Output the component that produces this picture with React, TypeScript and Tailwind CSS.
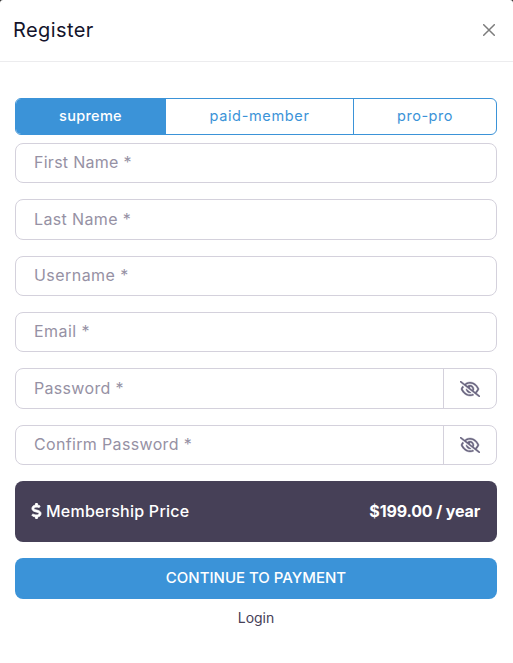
import { useState } from "react";
import { FaDollarSign, FaRegEyeSlash } from "react-icons/fa6";

const plans = [
  { name: "supreme", className: "w-[150px] font-medium tracking-[0.3px]" },
  { name: "paid-member", className: "w-[188px] tracking-[0.65px]" },
  { name: "pro-pro", className: "flex-1 tracking-[0.5px]" },
];

const fields = [
  { label: "First Name *", className: "tracking-[0.27px]" },
  { label: "Last Name *", className: "tracking-[0.36px]" },
  { label: "Username *", className: "tracking-[0.45px]" },
  { label: "Email *", className: "tracking-[0.45px]" },
  { label: "Password *", className: "tracking-[0.32px]", secret: true },
  { label: "Confirm Password *", className: "tracking-[0.34px]", secret: true },
];

const App = () => {
  const [plan, setPlan] = useState("supreme");

  return (
    <div className="h-[663px] w-full bg-[#2b2b2b] font-['Inter',sans-serif]">
      <div className="flex h-full flex-col rounded-t-[3px] bg-white">
        <header className="flex h-[62px] shrink-0 items-center justify-between border-b border-[#ececee] pr-[18px] pb-[2px] pl-[13px]">
          <h1 className="text-[20px] tracking-[0.4px] text-[#14142b]">Register</h1>
          <button aria-label="Close">
            <svg className="size-3" viewBox="0 0 12 12" stroke="#7c7c7c" strokeWidth="1.5" strokeLinecap="round">
              <path d="M0.7 0.7L11.3 11.3M11.3 0.7L0.7 11.3" />
            </svg>
          </button>
        </header>

        <form className="flex flex-col pt-9 pr-4 pl-[15px]" onSubmit={(e) => e.preventDefault()}>
          {/* Membership plans */}
          <div className="mb-2 flex h-[37px] overflow-hidden rounded-[6px] border border-[#3b93d8]">
            {plans.map(({ name, className }) => (
              <button
                key={name}
                type="button"
                onClick={() => setPlan(name)}
                className={`border-r border-[#3b93d8] pb-px text-[14.5px] last:border-r-0 ${className} ${
                  plan === name ? "bg-[#3b93d8] text-white" : "text-[#3b93d8]"
                }`}
              >
                {name}
              </button>
            ))}
          </div>

          {fields.map(({ label, className, secret }) => (
            <div
              key={label}
              className="mb-4 flex h-[40.35px] overflow-hidden rounded-[8px] border border-[#d4d1dc]"
            >
              <input
                type={secret ? "password" : "text"}
                placeholder={label}
                className={`min-w-0 flex-1 pb-[2px] pl-[18px] text-[16px] outline-none placeholder:text-[#9691a4] ${className}`}
              />
              {secret && (
                <button
                  type="button"
                  aria-label="Show password"
                  className="flex w-[53px] items-center justify-center border-l border-[#d4d1dc] text-[#6a6580]"
                >
                  <FaRegEyeSlash className="h-4 w-5" stroke="currentColor" strokeWidth="12" />
                </button>
              )}
            </div>
          ))}

          {/* Price summary */}
          <div className="flex h-[61px] items-center justify-between rounded-[8px] bg-[#464057] pr-[17px] pb-px pl-4 text-[16px] text-white">
            <span className="flex items-center gap-1">
              <FaDollarSign className="h-4 w-[11px]" stroke="currentColor" strokeWidth="28" />
              <span className="font-medium tracking-[0.25px]">Membership Price</span>
            </span>
            <span className="font-bold tracking-[-0.15px]">$199.00 / year</span>
          </div>

          <button className="mt-4 h-[41px] rounded-[8px] bg-[#3b93d8] pb-px text-[15px] font-medium text-white">
            CONTINUE TO PAYMENT
          </button>
          <a href="#" className="mt-2 self-center text-[14px] text-[#464057]">
            Login
          </a>
        </form>
      </div>
    </div>
  );
};

export default App;
